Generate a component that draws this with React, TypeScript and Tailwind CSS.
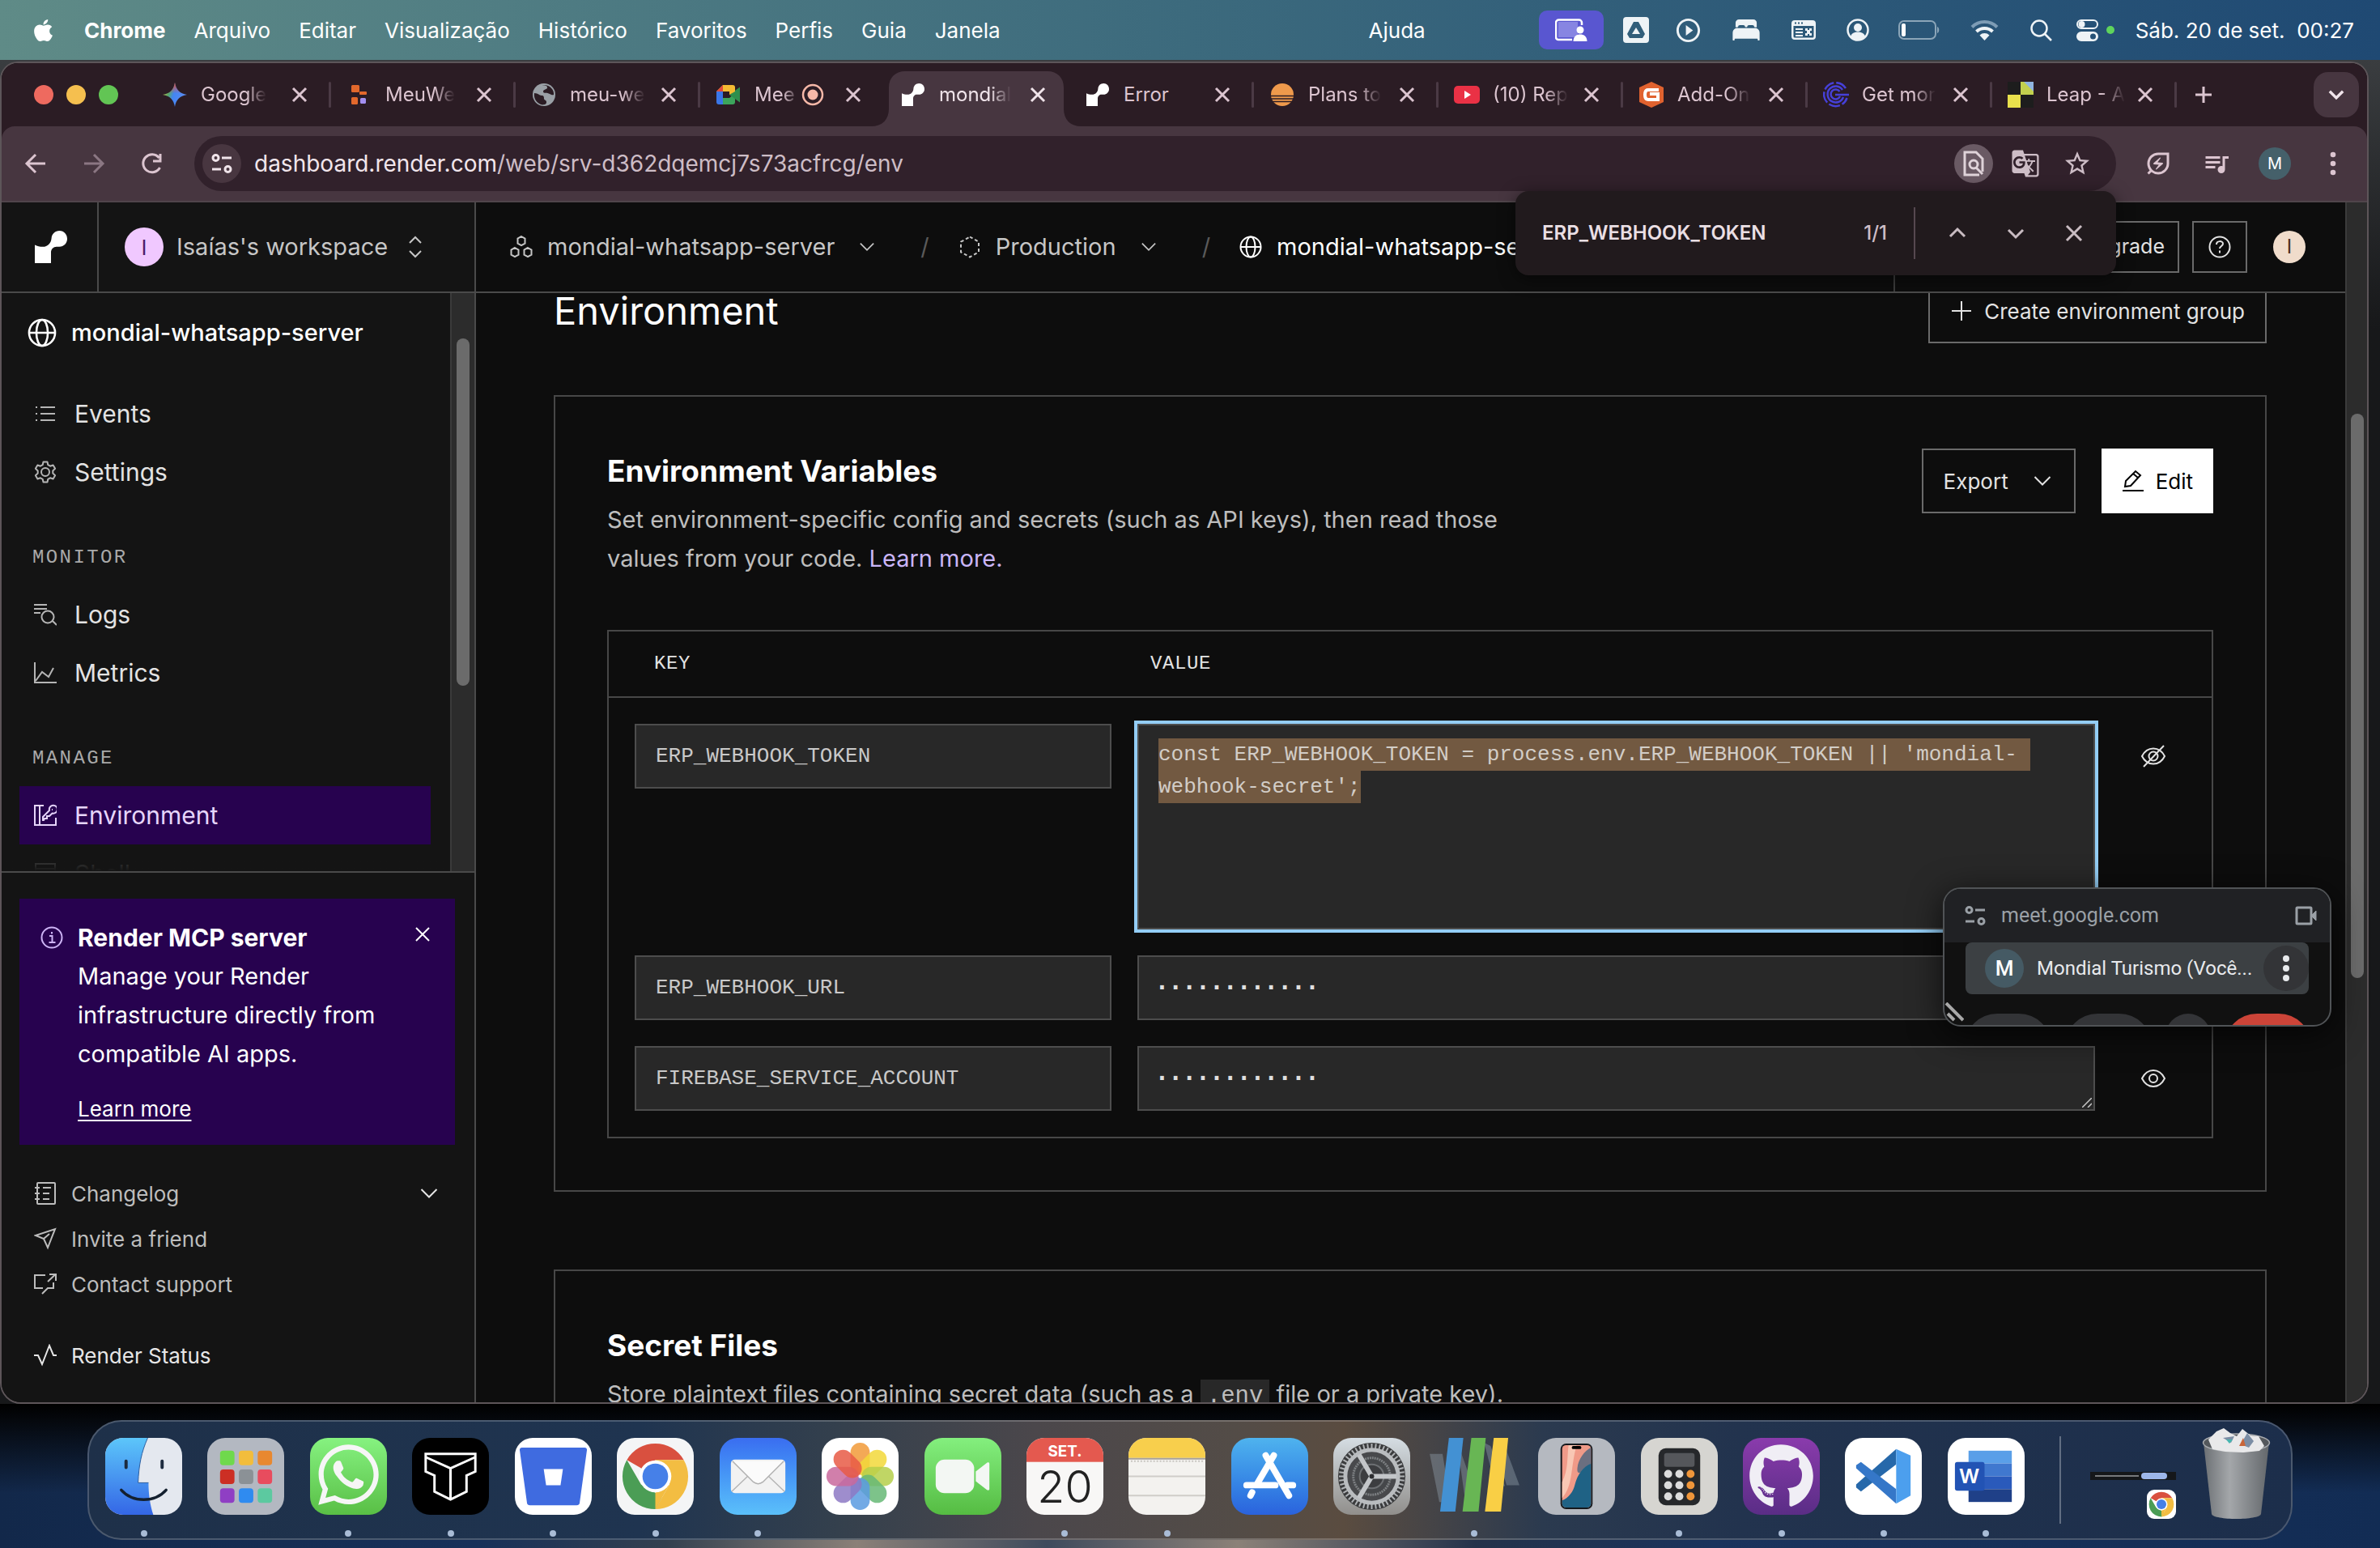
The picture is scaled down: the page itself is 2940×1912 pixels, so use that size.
import React, { useEffect, useRef } from "react";
import { FaApple, FaGithub, FaWhatsapp } from "react-icons/fa";
import { IoBed } from "react-icons/io5";
import {
  MdGTranslate,
  MdOutlineEnergySavingsLeaf,
  MdOutlineQueueMusic,
  MdPlayCircleOutline,
  MdStarBorder,
} from "react-icons/md";

type SvgProps = {
  className?: string;
  box?: string;
  sw?: number;
  children: React.ReactNode;
};

function Line({ className = "size-7", box = "0 0 28 28", sw = 2, children }: SvgProps) {
  return (
    <svg
      className={"shrink-0 " + className}
      viewBox={box}
      fill="none"
      stroke="currentColor"
      strokeWidth={sw}
      aria-hidden="true"
    >
      {children}
    </svg>
  );
}

/* ---------- shared glyphs ---------- */

const Cross = ({ className = "size-7", sw = 2 }: { className?: string; sw?: number }) => (
  <Line className={className} sw={sw}>
    <path d="M6 6l16 16M22 6L6 22" />
  </Line>
);
const Down = ({ className = "size-7", sw = 2 }: { className?: string; sw?: number }) => (
  <Line className={className} sw={sw}>
    <path d="M4.500 9l9.500 9.500L23.500 9" />
  </Line>
);
const Globe = ({ className = "size-7" }: { className?: string }) => (
  <Line className={className}>
    <circle cx="14" cy="14" r="12.500" />
    <ellipse cx="14" cy="14" rx="5.500" ry="12.500" />
    <path d="M1.500 14h25" />
  </Line>
);
const RenderMark = ({ className = "" }: { className?: string }) => (
  <svg className={"shrink-0 " + className} viewBox="0 0 40 40" fill="#fff" aria-hidden="true">
    <path d="M30.500 0C25 0 21 4 20.600 9.200c-.5 6-4.600 10.600-10.700 10.600C6 19.800 3 19 0 17.500V40h20V26.500c0-3.800 3-6.800 6.800-6.800h3.500C35.700 19.700 40 15.300 40 9.900S36 0 30.500 0z" />
  </svg>
);
const Tune = ({ className = "size-7" }: { className?: string }) => (
  <Line className={className} sw={3}>
    <circle cx="6.500" cy="7" r="3.500" />
    <path d="M14 7h12M2 21h11" />
    <circle cx="21.500" cy="21" r="3.500" />
  </Line>
);

/* ---------- macOS menu bar ---------- */

const menus = ["Arquivo", "Editar", "Visualização", "Histórico", "Favoritos", "Perfis", "Guia", "Janela"];

function MenuBar() {
  return (
    <header className="flex h-[74px] shrink-0 items-center bg-linear-to-r from-[#5f8b87] via-[#3c6a7d] to-[#1f4973] pr-8 pl-[38px] text-[26px] text-white">
      <FaApple className="mr-[35px] size-[31px] shrink-0" />
      <nav className="flex flex-1 items-center gap-[35px]">
        <button className="font-bold">Chrome</button>
        {menus.map((m) => (
          <button key={m}>{m}</button>
        ))}
      </nav>
      <button className="mr-[140px]">Ajuda</button>
      <div className="flex items-center">
        <span className="mr-6 flex h-12 w-20 items-center justify-center rounded-[10px] bg-[#5956d0]">
          <svg className="h-[28px] w-[40px]" viewBox="0 0 40 28" fill="none" aria-hidden="true">
            <rect x="4" y="4" width="24" height="19" fill="#8785e2" />
            <path d="M33 8V5a3.500 3.500 0 0 0-3.500-3.500h-25A3.500 3.500 0 0 0 1 5v18a3 3 0 0 0 3 3h17" stroke="#fff" strokeWidth="2.500" />
            <circle cx="31" cy="14" r="4.500" fill="#fff" />
            <path d="M22.500 28c0-6 4-8.500 8.500-8.500s8.500 2.500 8.500 8.500z" fill="#fff" />
          </svg>
        </span>
        <svg className="mr-[31px] size-8" viewBox="0 0 32 32" aria-hidden="true">
          <path fillRule="evenodd" fill="#eef3f6" d="M4 0h24a4 4 0 0 1 4 4v24a4 4 0 0 1-4 4H4a4 4 0 0 1-4-4V4a4 4 0 0 1 4-4zm9 6L5 21l3 5h16l3-5L19 6zm3 7l5 8H11z" />
        </svg>
        <MdPlayCircleOutline className="mr-[35px] size-[35px] text-[#eef3f6]" />
        <IoBed className="mr-[37px] size-[38px] text-[#eef3f6]" />
        <svg className="mr-[38px] h-6 w-[30px]" viewBox="0 0 30 24" aria-hidden="true">
          <path fillRule="evenodd" fill="#eef3f6" d="M4 0h22a4 4 0 0 1 4 4v16a4 4 0 0 1-4 4H4a4 4 0 0 1-4-4V4a4 4 0 0 1 4-4zM2.500 7v13a1.500 1.500 0 0 0 1.500 1.500h22a1.500 1.500 0 0 0 1.500-1.500V7zM4 2.500v2h2v-2zm4 0v2h2v-2zm4 0v2h2v-2zM5 10h9v2H5zm0 4h9v2H5zm0 4h9v2H5zM17 10h3v2h2v-2h3v3h-2v3h2v3h-3v-2h-2v2h-3v-3h2v-3h-2z" />
        </svg>
        <svg className="mr-[36px] size-7" viewBox="0 0 28 28" aria-hidden="true">
          <circle cx="14" cy="14" r="12.500" fill="none" stroke="#eef3f6" strokeWidth="2.500" />
          <circle cx="14" cy="11" r="5" fill="#eef3f6" />
          <path d="M5 22c1-4 5-5.500 9-5.500s8 1.500 9 5.500c-2 3-6 4.500-9 4.500S7 25 5 22z" fill="#eef3f6" />
        </svg>
        <svg className="mr-[37px] h-6 w-[52px]" viewBox="0 0 52 24" aria-hidden="true">
          <rect x="1" y="1" width="45" height="22" rx="6" fill="none" stroke="#8ba5b8" strokeWidth="2" />
          <rect x="4" y="4" width="5" height="16" rx="2" fill="#fff" />
          <path d="M48 8v8c3-1 3-7 0-8z" fill="#8ba5b8" />
        </svg>
        <svg className="mr-[39px] h-[26px] w-[35px]" viewBox="0 0 35 26" fill="none" aria-hidden="true">
          <path d="M2 9.500a22 22 0 0 1 31 0" stroke="#7d9cb5" strokeWidth="4" />
          <path d="M7.500 15a14.500 14.500 0 0 1 20 0" stroke="#eef3f6" strokeWidth="4" />
          <path d="M11.500 19.500a8.500 8.500 0 0 1 12 0L17.500 26z" fill="#eef3f6" />
        </svg>
        <svg className="mr-[30px] size-[27px]" viewBox="0 0 27 27" fill="none" stroke="#eef3f6" strokeWidth="2.500" aria-hidden="true">
          <circle cx="11" cy="11" r="9.500" />
          <path d="M18 18l8 8" />
        </svg>
        <svg className="mr-[10px] h-[27px] w-[27px]" viewBox="0 0 27 27" aria-hidden="true">
          <rect x="1" y="1" width="25" height="10" rx="5" fill="none" stroke="#eef3f6" strokeWidth="2" />
          <circle cx="6.500" cy="6" r="4" fill="#eef3f6" />
          <path fillRule="evenodd" fill="#eef3f6" d="M6 15h15a6 6 0 0 1 0 12H6a6 6 0 0 1 0-12zm14.500 2.500a3.500 3.500 0 1 0 0 7 3.500 3.500 0 0 0 0-7z" />
        </svg>
        <span className="mr-[26px] size-[10px] rounded-full bg-[#5fd45c]" />
        <time className="whitespace-pre">{"Sáb. 20 de set.  00:27"}</time>
      </div>
    </header>
  );
}

/* ---------- Chrome tabs ---------- */

const favicons: Record<string, React.ReactNode> = {
  gemini: (
    <>
      <defs>
        <linearGradient id="gem" x1="0" y1="0" x2="1" y2="0.300">
          <stop offset="0" stopColor="#f5c53d" />
          <stop offset="0.350" stopColor="#56a66a" />
          <stop offset="0.550" stopColor="#4285f4" />
          <stop offset="1" stopColor="#5b8cf0" />
        </linearGradient>
        <linearGradient id="gem2" x1="0" y1="0" x2="0" y2="1">
          <stop offset="0" stopColor="#ea4b3f" />
          <stop offset="0.450" stopColor="#ea4b3f" stopOpacity="0" />
        </linearGradient>
      </defs>
      <path d="M16 1c1.500 9 6 13.500 15 15-9 1.500-13.500 6-15 15-1.500-9-6-13.500-15-15 9-1.500 13.500-6 15-15z" fill="url(#gem)" />
      <path d="M16 1c1.500 9 6 13.500 15 15-9 1.500-13.500 6-15 15-1.500-9-6-13.500-15-15 9-1.500 13.500-6 15-15z" fill="url(#gem2)" />
    </>
  ),
  blocks: (
    <>
      <rect x="6" y="4" width="10" height="9" rx="1.500" fill="#e2682c" />
      <rect x="16" y="12" width="9" height="4" rx="1" fill="#e2682c" />
      <rect x="6" y="19" width="8" height="9" rx="1.500" fill="#e2682c" />
      <rect x="17" y="20" width="7" height="7" rx="1.500" fill="#a38ff0" />
    </>
  ),
  world: (
    <>
      <circle cx="16" cy="16" r="14" fill="#9aa0a6" />
      <path d="M4 14c5 0 6 3 9 3s3 2 3 4 3 1 3 4-2 3-5 3.500C7 27 3 21 4 14zM14 4c2 1 6 0 6 3s-5 2-5 5 5 1 8 3 5 1 5 1c1-6-5-13-14-12z" fill="#2b1c24" />
    </>
  ),
  meet: (
    <>
      <path d="M9 4h12v8h-6v8H9v-8H1z" fill="#f5bb33" />
      <path d="M9 4v8H1z" fill="#e04a3c" />
      <path d="M1 12h8v16H4a3 3 0 0 1-3-3z" fill="#3a76e8" />
      <path d="M9 20h8l7-6v11a3 3 0 0 1-3 3H9z" fill="#3ca55c" />
      <path d="M17 16l13-9.500v19z" fill="#2f8f4d" />
      <path d="M21 4c2 0 3 1 3 3v5l-7 4v-4z" fill="#f5bb33" />
      <rect x="9" y="12" width="8" height="8" fill="#2b1c24" />
    </>
  ),
  render: (
    <path transform="translate(2 2) scale(.7)" d="M30.500 0C25 0 21 4 20.600 9.200c-.5 6-4.600 10.600-10.700 10.600C6 19.800 3 19 0 17.500V40h20V26.500c0-3.800 3-6.800 6.800-6.800h3.500C35.700 19.700 40 15.300 40 9.900S36 0 30.500 0z" fill="#fff" />
  ),
  sun: (
    <>
      <circle cx="16" cy="16" r="14" fill="#ef9a4c" />
      <path d="M1 17.500h30M1 21h30M1 24.500h30" stroke="#2b1c24" strokeWidth="1.500" />
    </>
  ),
  youtube: (
    <>
      <rect x="0" y="5" width="32" height="22" rx="5" fill="#ea3145" />
      <path d="M13 11l8 5-8 5z" fill="#fff" />
    </>
  ),
  addon: (
    <>
      <path d="M16 0l15 7v18l-15 7-15-7V7z" fill="#e0622f" />
      <path d="M25 10H12c-3 0-4 2-4 6s1 6 4 6h12v-7H14" fill="none" stroke="#fff" strokeWidth="4" />
    </>
  ),
  gmark: (
    <g fill="none" stroke="#4640d8">
      <path d="M28 8A14.500 14.500 0 1 0 29.500 20" strokeWidth="2.500" strokeDasharray="14 3" />
      <path d="M24 10A10 10 0 1 0 25 19" strokeWidth="2.500" />
      <path d="M20.500 12A6 6 0 1 0 21 18M15 16h17" strokeWidth="2.500" />
    </g>
  ),
  leap: (
    <>
      <rect width="16" height="16" fill="#1d1d1d" />
      <rect x="16" y="16" width="16" height="16" fill="#1d1d1d" />
      <rect y="16" width="16" height="16" fill="#e8e04c" />
      <path d="M16 0h16v16H16z" fill="#c2d04e" />
      <path d="M20 0h12v12z" fill="#8fb4e0" />
    </>
  ),
};

const tabs: { icon: string; title: string; sep?: boolean; active?: boolean; rec?: boolean; whole?: boolean }[] = [
  { icon: "gemini", title: "Google", sep: true },
  { icon: "blocks", title: "MeuWe", sep: true },
  { icon: "world", title: "meu-we", sep: true },
  { icon: "meet", title: "Mee", rec: true },
  { icon: "render", title: "mondial", active: true },
  { icon: "render", title: "Error", sep: true, whole: true },
  { icon: "sun", title: "Plans to", sep: true },
  { icon: "youtube", title: "(10) Rep", sep: true },
  { icon: "addon", title: "Add-On", sep: true },
  { icon: "gmark", title: "Get mor", sep: true },
  { icon: "leap", title: "Leap - A", sep: true },
];

function TabStrip() {
  return (
    <div className="flex h-[78px] shrink-0 items-center bg-[#2b1c24] pr-[10px] pl-[40px]">
      <div className="mr-[34px] flex gap-4">
        <button aria-label="Fechar" className="size-6 rounded-full bg-[#ee6a5f]" />
        <button aria-label="Minimizar" className="size-6 rounded-full bg-[#f5bf4f]" />
        <button aria-label="Ampliar" className="size-6 rounded-full bg-[#62c554]" />
      </div>
      {tabs.map((t, i) => (
        <div key={i} className="relative flex h-full w-[228px] min-w-0 items-center">
          {t.active && (
            <svg className="absolute inset-x-[-16px] bottom-0 h-[68px] w-[260px]" viewBox="0 0 260 68" fill="#473640" aria-hidden="true">
              <path d="M0 68c14 0 22-8 22-22V20C22 8 30 0 42 0h176c12 0 20 8 20 20v26c0 14 8 22 22 22z" />
            </svg>
          )}
          <svg className="relative ml-5 size-8 shrink-0" viewBox="0 0 32 32" aria-hidden="true">
            {favicons[t.icon]}
          </svg>
          <span
            className={
              "relative ml-4 text-[24px] whitespace-nowrap " +
              (t.whole ? "" : t.rec ? "mask-r-from-70% mask-r-to-110% " : "mask-r-from-70% mask-r-to-100% ") +
              (t.active ? "text-[#f0e4ea]" : "text-[#dcc5d0]")
            }
          >
            {t.title}
          </span>
          {t.rec && (
            <svg className="relative ml-2 size-7" viewBox="0 0 28 28" aria-hidden="true">
              <circle cx="14" cy="14" r="12" fill="none" stroke="#f6b8a8" strokeWidth="2.500" />
              <circle cx="14" cy="14" r="6.500" fill="#f6b8a8" />
            </svg>
          )}
          <button
            aria-label="Fechar guia"
            className={"relative mr-[24px] ml-auto " + (t.active ? "text-[#f0e4ea]" : "text-[#dcc5d0]")}
          >
            <Cross className="size-7" sw={3} />
          </button>
          {t.sep && <span className="absolute right-[-1px] h-8 w-[3px] rounded bg-[#4b3a45]" />}
        </div>
      ))}
      <button aria-label="Nova guia" className="ml-5 text-[#dcc5d0]">
        <Line sw={3}>
          <path d="M14 4v20M4 14h20" />
        </Line>
      </button>
      <button aria-label="Pesquisar guias" className="ml-auto flex size-14 items-center justify-center rounded-[18px] bg-[#473640] text-[#f0e4ea]">
        <Down className="size-6" sw={4} />
      </button>
    </div>
  );
}

function Toolbar() {
  return (
    <div className="shrink-0 bg-[#2b1c24]">
      <div className="flex h-[94px] items-center rounded-t-[16px] border-b-2 border-[#50454b] bg-[#473640] px-[6px] text-[#dcc5d0]">
        <button aria-label="Voltar" className="flex w-[72px] justify-center">
          <Line sw={3}>
            <path d="M26 14H4M14 3L3 14l11 11" />
          </Line>
        </button>
        <button aria-label="Avançar" className="flex w-[72px] justify-center text-[#8b7783]">
          <Line sw={3}>
            <path d="M2 14h22M14 3l11 11-11 11" />
          </Line>
        </button>
        <button aria-label="Recarregar" className="flex w-[72px] justify-center">
          <Line sw={3}>
            <path d="M23.500 19A11 11 0 1 1 22.500 7M24 2v9h-9" />
          </Line>
        </button>
        <div className="ml-4 flex h-[68px] flex-1 items-center rounded-full bg-[#31212b] pr-4 pl-[10px]">
          <button aria-label="Informações do site" className="mr-4 flex size-12 items-center justify-center rounded-full bg-[#483640] text-[#f0e4ea]">
            <Tune className="size-7" />
          </button>
          <p className="flex-1 text-[28px] text-[#cdbdc6]">
            <span className="text-[#f2e6ec]">dashboard.render.com</span>/web/srv-d362dqemcj7s73acfrcg/env
          </p>
          <button aria-label="Localizar na página" className="mx-2 flex size-12 items-center justify-center rounded-full bg-[#6a5a64] text-[#dfd3d9]">
            <Line className="h-8 w-7" box="0 0 28 32" sw={3}>
              <path d="M25 26V10l-8-8H3v28h18" />
              <circle cx="14" cy="17" r="5" />
              <path d="M17 21l8 8" />
            </Line>
          </button>
          <button aria-label="Traduzir" className="flex w-16 justify-center text-[#cdbdc6]">
            <MdGTranslate className="size-9" />
          </button>
          <button aria-label="Favoritar" className="flex w-16 justify-center text-[#cdbdc6]">
            <MdStarBorder className="size-9" />
          </button>
        </div>
        <div className="ml-4 flex items-center">
          <button aria-label="Economia de energia" className="flex w-[72px] justify-center">
            <MdOutlineEnergySavingsLeaf className="size-9" />
          </button>
          <button aria-label="Mídia" className="flex w-[72px] justify-center">
            <MdOutlineQueueMusic className="size-9" />
          </button>
          <button className="mx-4 flex size-10 items-center justify-center rounded-full bg-[#45606a] text-[20px] text-white">M</button>
          <button aria-label="Menu" className="flex w-[72px] justify-center">
            <svg className="size-8" viewBox="0 0 32 32" fill="currentColor" aria-hidden="true">
              <circle cx="16" cy="5" r="3.300" />
              <circle cx="16" cy="16" r="3.300" />
              <circle cx="16" cy="27" r="3.300" />
            </svg>
          </button>
        </div>
      </div>
    </div>
  );
}

function FindBar() {
  return (
    <div className="absolute top-[158px] right-[310px] flex h-[104px] w-[742px] items-center rounded-[16px] bg-[#211a1d] pr-4 pl-[33px] text-[24px] font-medium text-[#eadfe4] shadow-[0_4px_20px_rgba(0,0,0,0.5)]">
      <input aria-label="Localizar" defaultValue="ERP_WEBHOOK_TOKEN" className="min-w-0 flex-1 bg-transparent font-semibold outline-none" />
      <span className="text-[#cdbdc6]">1/1</span>
      <span className="mr-4 ml-[33px] h-16 w-[2px] bg-[#564850]" />
      {["M5 18l9-9 9 9", "M5 10l9 9 9-9", "M5 5l18 18M23 5L5 23"].map((d, i) => (
        <button key={d} aria-label={["Anterior", "Próximo", "Fechar"][i]} className="flex w-[72px] justify-center text-[#c9bcc2]">
          <Line className="size-7" sw={3}>
            <path d={d} />
          </Line>
        </button>
      ))}
    </div>
  );
}

/* ---------- Render dashboard ---------- */

const icons: Record<string, React.ReactNode> = {
  list: <path d="M2 6h2M8 6h18M2 14h2M8 14h18M2 22h2M8 22h18" />,
  gear: (
    <>
      <circle cx="14" cy="14" r="5" />
      <path d="M11.500 1.500h5l.8 3.700 2.700 1.500 3.600-1.200 2.500 4.300-2.800 2.600v3.200l2.800 2.600-2.500 4.300-3.600-1.200-2.700 1.500-.8 3.700h-5l-.8-3.700L8 21.300l-3.600 1.200-2.500-4.300 2.800-2.600v-3.200L1.900 9.800l2.500-4.300L8 6.700l2.700-1.500z" strokeLinejoin="round" />
    </>
  ),
  logs: (
    <>
      <path d="M0 2h16M0 7h16M0 12h8M23 22l5 5" />
      <circle cx="17" cy="17" r="7.500" />
    </>
  ),
  chart: <path d="M1 1v25h27M2 24l8-11 8 6 6-11" />,
  env: <path d="M12 2H1v24h26v-9M7 2v24M11 20v-4l8-8a5 5 0 1 1 3.500 3.500L19 15h-3v3h-3l-1 2zM22 7h1" />,
  shell: (
    <>
      <rect x="2" y="2" width="24" height="24" />
      <path d="M2 8h24" />
    </>
  ),
  book: (
    <>
      <rect x="4" y="1" width="22" height="26" rx="1" />
      <path d="M1 7h6M1 14h6M1 21h6M11 7h10M11 14h8M11 21h8" />
    </>
  ),
  send: <path d="M2 10L26 2l-9 23-5-11zM12 14l7-6" />,
  support: <path d="M14 3H1v16h10M10 26l7-7h7v-7M17 11L26.500 2M19 2h8v8" />,
  pulse: <path d="M0 14h5l5 11L19 2l5 12h4" />,
};

function NavItem({ icon, label, active, faded }: { icon: string; label: string; active?: boolean; faded?: boolean }) {
  return (
    <a
      href="#"
      className={
        "mr-6 ml-[22px] flex h-[72px] items-center gap-[22px] px-[18px] text-[30px] " +
        (active ? "bg-[#27024f] text-[#e6d5fb]" : faded ? "text-[#777]" : "text-[#e3e3e3]")
      }
    >
      <Line className={"size-7 " + (active || faded ? "" : "text-[#b5b5b5]")}>{icons[icon]}</Line>
      {label}
    </a>
  );
}

const NavLabel = ({ children }: { children: string }) => (
  <h2 className="pt-[50px] pb-[14px] pl-[38px] font-['Liberation_Mono',monospace] text-[24px] leading-10 tracking-widest text-[#a9a9a9]">{children}</h2>
);

function FootLink({ icon, label, bright, more }: { icon: string; label: string; bright?: boolean; more?: boolean }) {
  return (
    <a href="#" className={"flex h-14 items-center gap-[18px] pr-[18px] pl-[18px] text-[26px] " + (bright ? "text-[#e6e6e6]" : "text-[#bdbdbd]")}>
      <Line className="size-7">{icons[icon]}</Line>
      <span className="flex-1">{label}</span>
      {more && <Down className="size-7 text-[#e6e6e6]" />}
    </a>
  );
}

function Sidebar() {
  return (
    <aside className="flex w-[586px] shrink-0 flex-col border-r-2 border-[#4a4a4a] bg-[#141414]">
      <div className="flex min-h-0 flex-1">
        <nav className="relative h-full min-w-0 flex-1 overflow-hidden">
          <a href="#" className="mb-4 flex h-[97px] items-center gap-[18px] pl-8 text-[29px] font-medium whitespace-nowrap text-white">
            <Globe className="size-9" />
            mondial-whatsapp-server
          </a>
          <NavItem icon="list" label="Events" />
          <NavItem icon="gear" label="Settings" />
          <NavLabel>MONITOR</NavLabel>
          <NavItem icon="logs" label="Logs" />
          <NavItem icon="chart" label="Metrics" />
          <NavLabel>MANAGE</NavLabel>
          <NavItem icon="env" label="Environment" active />
          <NavItem icon="shell" label="Shell" faded />
          <div className="absolute inset-x-0 bottom-0 h-6 bg-linear-to-b from-[#141414]/30 to-[#141414]" />
        </nav>
        <div className="w-[30px] border-l-2 border-[#3b3b3b] bg-[#2c2c2c] pt-14">
          <div className="mx-auto h-[429px] w-4 rounded-full bg-[#6b6b6b]" />
        </div>
      </div>
      <div className="border-t-2 border-[#4a4a4a] pt-8 pr-6 pb-[30px] pl-[22px]">
        <section className="relative flex bg-[#27024f] px-[26px] py-6 text-[29px] leading-[48px] text-white">
          <Line className="mt-[10px] mr-[18px] size-7 text-[#cdb4f5]">
            <circle cx="14" cy="14" r="12.500" />
            <path d="M11 12h3.500v8M10.500 20h8M14 7v2.500" />
          </Line>
          <div>
            <h3 className="text-[30px] font-bold">Render MCP server</h3>
            <p>
              Manage your Render
              <br />
              infrastructure directly from
              <br />
              compatible AI apps.
            </p>
            <a href="#" className="mt-6 block text-[26px] leading-10 underline underline-offset-4">
              Learn more
            </a>
          </div>
          <button aria-label="Dismiss" className="absolute top-[30px] right-[26px]">
            <Cross className="size-7" />
          </button>
        </section>
        <div className="mt-8">
          <FootLink icon="book" label="Changelog" more />
          <FootLink icon="send" label="Invite a friend" />
          <FootLink icon="support" label="Contact support" />
        </div>
        <div className="mt-8">
          <FootLink icon="pulse" label="Render Status" bright />
        </div>
      </div>
    </aside>
  );
}

function PageHeader() {
  return (
    <header className="flex h-[112px] shrink-0 border-b-2 border-[#4a4a4a] text-[29px] text-[#c6c6c6]">
      <a href="#" aria-label="Render" className="flex w-[120px] items-center border-r-2 border-[#4a4a4a] bg-[#141414] pl-[41px]">
        <RenderMark className="size-10" />
      </a>
      <button className="flex w-[466px] items-center border-r-2 border-[#4a4a4a] bg-[#141414] pl-8">
        <span className="mr-[16px] flex size-12 items-center justify-center rounded-full bg-[#f0c8ff] text-[26px] text-[#4c1d6b]">I</span>
        Isaías's workspace
        <Line className="ml-6 h-7 w-5" box="0 0 20 28">
          <path d="M3 9l7-7 7 7M3 19l7 7 7-7" />
        </Line>
      </button>
      <nav className="flex min-w-0 flex-1 items-center pl-[42px] whitespace-nowrap">
        <Line className="mr-[18px] size-7">
          <path d="M14 1l4.500 2.600v6L14 12.200 9.500 9.600v-6zM6 15l4.500 2.600v6L6 26.200l-4.500-2.600v-6zM22 15l4.500 2.600v6L22 26.200l-4.500-2.600v-6z" />
        </Line>
        <a href="#">mondial-whatsapp-server</a>
        <Down className="ml-7 size-6" />
        <span className="mr-9 ml-[54px] text-[#5a5a5a]">/</span>
        <Line className="mr-[18px] size-7">
          <path d="M14 1.500l11 6.200v12.600l-11 6.200-11-6.200V7.700z" strokeDasharray="4 3" />
        </Line>
        <a href="#">Production</a>
        <Down className="ml-7 size-6" />
        <span className="mr-9 ml-[54px] text-[#5a5a5a]">/</span>
        <Globe className="mr-[18px] size-7 text-white" />
        <a href="#" className="text-white">mondial-whatsapp-server</a>
      </nav>
      <div className="flex items-center border-l-2 border-[#3b3b3b] bg-[#0d0d0d] pr-[49px] pl-[200px] text-[25px] text-[#e3e3e3]">
        <button className="mr-4 flex h-16 w-[151px] items-center justify-end border-2 border-[#6a6a6a] pr-4">Upgrade</button>
        <button aria-label="Help" className="mr-8 flex h-16 w-[68px] items-center justify-center border-2 border-[#6a6a6a]">
          <Line>
            <circle cx="14" cy="14" r="12.500" />
            <path d="M10 11c0-5 8-5 8-1 0 3-4 3-4 6M14 18.500v3" />
          </Line>
        </button>
        <button className="flex size-10 items-center justify-center rounded-full bg-[#f0dccb] text-[24px] text-[#4a2f1a]">I</button>
      </div>
    </header>
  );
}

const field =
  "block w-full resize-none border-2 border-[#4d4d4d] bg-[#282828] px-6 font-['Liberation_Mono',monospace] text-[26px] leading-10 text-[#c9c9c9] outline-none";
const masked = "············";

function EnvTable() {
  const token = useRef<HTMLTextAreaElement>(null);
  useEffect(() => {
    token.current?.focus({ preventScroll: true });
    token.current?.select();
  }, []);
  return (
    <div className="mt-16 border-2 border-[#474747] pb-8">
      <table className="w-full table-fixed border-collapse">
        <colgroup>
          <col className="w-[653px]" />
          <col />
          <col className="w-[144px]" />
        </colgroup>
        <thead>
          <tr className="h-[81px] border-b-2 border-[#474747] text-left font-['Liberation_Mono',monospace] text-[24px] tracking-wide text-[#e3e3e3]">
            <th className="pl-14 font-normal">KEY</th>
            <th className="pl-4 font-normal">VALUE</th>
            <th />
          </tr>
        </thead>
        <tbody className="align-top">
          <tr>
            <td className="px-8 pt-8">
              <input aria-label="Key" readOnly value="ERP_WEBHOOK_TOKEN" className={field + " h-20"} />
            </td>
            <td className="pt-8">
              <textarea
                ref={token}
                aria-label="Value of ERP_WEBHOOK_TOKEN"
                readOnly
                value={"const ERP_WEBHOOK_TOKEN = process.env.ERP_WEBHOOK_TOKEN || 'mondial-\nwebhook-secret';"}
                className={field + " h-[254px] py-4 ring-4 ring-[#93cdf5] selection:bg-[rgba(115,90,66,0.99)] selection:text-[#d2cdc7]"}
              />
            </td>
            <td className="pt-8">
              <button aria-label="Hide value" className="mx-auto flex h-20 items-center text-[#e3e3e3]">
                <Line className="size-8" box="0 0 32 32">
                  <path d="M2 16c3-6 8-9.500 14-9.500S27 10 30 16c-3 6-8 9.500-14 9.500S5 22 2 16zM29 3L4 29" />
                  <circle cx="16" cy="16" r="5.500" />
                </Line>
              </button>
            </td>
          </tr>
          {["ERP_WEBHOOK_URL", "FIREBASE_SERVICE_ACCOUNT"].map((k) => (
            <tr key={k}>
              <td className="px-8 pt-8">
                <input aria-label="Key" readOnly value={k} className={field + " h-20"} />
              </td>
              <td className="relative pt-8">
                <textarea
                  aria-label={"Value of " + k}
                  readOnly
                  value={masked}
                  className="block h-20 w-full resize-none overflow-hidden border-2 border-[#4d4d4d] bg-[#282828] px-5 py-[18px] font-['DejaVu_Sans_Mono',monospace] text-[28px] leading-10 font-bold text-[#e0e0e0] outline-none"
                />
                <Line className="absolute right-1 bottom-1 size-3 text-[#c9c9c9]" box="0 0 12 12" sw={1.5}>
                  <path d="M0 12L12 0M7 12l5-5" />
                </Line>
              </td>
              <td className="pt-8">
                <button aria-label="Show value" className="mx-auto flex h-20 items-center text-[#e3e3e3]">
                  <Line className="size-8" box="0 0 32 32">
                    <path d="M2 16c3-6 8-10 14-10s11 4 14 10c-3 6-8 10-14 10S5 22 2 16z" />
                    <circle cx="16" cy="16" r="5" />
                  </Line>
                </button>
              </td>
            </tr>
          ))}
        </tbody>
      </table>
    </div>
  );
}

function Main() {
  return (
    <main className="min-w-0 flex-1 overflow-hidden bg-[#0d0d0d] pr-[97px] pl-24">
      <div className="-mt-[18px] mb-16 flex h-20 items-center justify-between">
        <h1 className="text-[47px] text-white">Environment</h1>
        <button className="flex h-20 items-center gap-[14px] border-2 border-[#6a6a6a] px-[25px] text-[26px] text-[#e3e3e3]">
          <Line>
            <path d="M14 2v24M2 14h24" />
          </Line>
          Create environment group
        </button>
      </div>
      <section className="border-2 border-[#474747] p-16">
        <div className="flex justify-between">
          <div>
            <h2 className="text-[37px] leading-14 font-bold text-white">Environment Variables</h2>
            <p className="mt-2 text-[29px] leading-[48px] text-[#bdbdbd]">
              Set environment-specific config and secrets (such as API keys), then read those
              <br />
              values from your code.{" "}
              <a href="#" className="text-[#c9b5f7]">
                Learn more.
              </a>
            </p>
          </div>
          <div className="flex h-20 gap-8 text-[26px]">
            <button className="flex items-center gap-[28px] border-2 border-[#6a6a6a] px-[25px] text-[#e3e3e3]">
              Export <Down className="size-7" />
            </button>
            <button className="flex items-center gap-[14px] bg-white px-[25px] text-black">
              <Line>
                <path d="M1 26h26M4 21l1-7L17 2l6 5-12 13zM14 5l6 5" />
              </Line>
              Edit
            </button>
          </div>
        </div>
        <EnvTable />
      </section>
      <section className="mt-24 border-2 border-[#474747] p-16">
        <h2 className="text-[37px] leading-14 font-bold text-white">Secret Files</h2>
        <p className="mt-2 text-[29px] leading-[48px] text-[#bdbdbd]">
          Store plaintext files containing secret data (such as a{" "}
          <code className="bg-[#282828] px-2 py-1 font-['Liberation_Mono',monospace]">.env</code> file or a private key).
        </p>
      </section>
    </main>
  );
}

/* ---------- Meet picture-in-picture ---------- */

function MeetWindow() {
  return (
    <div className="absolute top-[1096px] right-[60px] flex h-[172px] w-[480px] flex-col overflow-hidden rounded-[22px] border-2 border-[#505356] bg-[#111] font-[Roboto,sans-serif] shadow-[0_8px_40px_rgba(0,0,0,0.7)]">
      <div className="flex h-[66px] shrink-0 items-center bg-[#202124] pr-[16px] pl-[24px] text-[25px] text-[#9aa0a6]">
        <Tune className="mr-[18px] size-7" />
        <span className="flex-1">meet.google.com</span>
        <Line sw={3}>
          <rect x="3" y="4" width="18" height="20" rx="1" />
          <path d="M21 14l6-6v12z" fill="currentColor" strokeWidth="1" />
        </Line>
      </div>
      <div className="mx-[26px] flex h-16 shrink-0 items-center rounded-lg bg-[#3c4043] pl-6 text-[24px] text-[#e8eaed]">
        <span className="mr-4 flex size-12 shrink-0 items-center justify-center rounded-full bg-[#455a64] text-[26px] font-medium text-white">M</span>
        <span className="flex-1 whitespace-nowrap">Mondial Turismo (Você...</span>
        <button aria-label="Mais opções" className="flex size-14 shrink-0 items-center justify-center rounded-full bg-[#333437]">
          <svg className="h-8 w-3" viewBox="0 0 12 32" fill="#e8eaed" aria-hidden="true">
            <circle cx="6" cy="4" r="4" />
            <circle cx="6" cy="16" r="4" />
            <circle cx="6" cy="28" r="4" />
          </svg>
        </button>
      </div>
      <div className="mt-6 flex gap-[17px] pl-[25px]">
        <span className="h-20 w-[107px] shrink-0 rounded-full bg-[#333437]" />
        <span className="h-20 w-[107px] shrink-0 rounded-full bg-[#333437]" />
        <span className="h-20 w-[56px] shrink-0 rounded-full bg-[#333437]" />
        <span className="h-20 w-[107px] shrink-0 rounded-full bg-[#cc4438]" />
      </div>
      <Line className="absolute bottom-1 left-0 size-6 text-[#a8a8a8]" box="0 0 24 24" sw={4}>
        <path d="M2 1l21 21M4 14l8 8" />
      </Line>
    </div>
  );
}

/* ---------- Dock ---------- */

function ChromeLogo() {
  return (
    <>
      <path d="M48 48L12.500 27.500A41 41 0 0 1 83.500 27.500H48z" fill="#d9503f" />
      <path d="M48 27.500h35.500A41 41 0 0 1 48 89l17.800-30.800z" fill="#f3bd42" />
      <path d="M12.500 27.500L30.200 58.200 48 68.500l8 6L48 89A41 41 0 0 1 12.500 27.500z" fill="#4b9d55" />
      <path d="M48 68.500l17.800-10.300L48 89z" fill="#f3bd42" />
      <circle cx="48" cy="48" r="20" fill="#fff" />
      <circle cx="48" cy="48" r="16" fill="#4680e8" />
    </>
  );
}

const teeth = Array.from({ length: 48 }, (_, i) => i * 7.5);
const petals = [
  ["#f19a38", 0],
  ["#f2d83a", 45],
  ["#b5cf4a", 90],
  ["#66b876", 135],
  ["#5a9be0", 180],
  ["#8d79c4", 225],
  ["#c9689c", 270],
  ["#e85a45", 315],
] as const;

type App = { name: string; bg: string; run?: boolean; art: React.ReactNode };

const apps: App[] = [
  {
    name: "Finder",
    bg: "bg-[#e4e8ef]",
    run: true,
    art: (
      <>
        <path d="M0 0h53c-8 18-11 34-12 56h13c0 14 2 28 6 40H0z" fill="url(#dkfinder)" />
        <path d="M26 29v8M71 29v8" stroke="#1d2b3f" strokeWidth="4" strokeLinecap="round" />
        <path d="M20 65c14 16 42 16 56 0" fill="none" stroke="#14202f" strokeWidth="3.500" strokeLinecap="round" />
        <path d="M53 0c-8 18-11 34-12 56h13" fill="none" stroke="#2a5ea0" strokeWidth="1" />
      </>
    ),
  },
  {
    name: "Launchpad",
    bg: "bg-[#b3b8c1]",
    art: (
      <>
        {["#6fd94c", "#f2bd3c", "#e8882f", "#cc2f24", "#8b9196", "#e84c5e", "#8f3fc4", "#2f8bf0", "#5cc9a0"].map((c, i) => (
          <rect key={c} x={16 + (i % 3) * 23.5} y={16 + Math.floor(i / 3) * 23.5} width="18" height="18" rx="4" fill={c} />
        ))}
      </>
    ),
  },
  {
    name: "WhatsApp",
    bg: "bg-linear-to-b from-[#86f280] to-[#59bf45]",
    run: true,
    art: <FaWhatsapp x={5} y={3} size={86} color="#f6f6f6" />,
  },
  {
    name: "Warp",
    bg: "bg-black",
    run: true,
    art: (
      <path
        d="M17 20h62v22L68 47v20L48 77 28 67V47L17 42zM17 24l31 14 31-14M48 38v38"
        fill="none"
        stroke="#fff"
        strokeWidth="3"
      />
    ),
  },
  {
    name: "Bitbucket",
    bg: "bg-white",
    run: true,
    art: (
      <>
        <path d="M9 12h78a3 3 0 0 1 3 3L81 80a4 4 0 0 1-4 4H19a4 4 0 0 1-4-4L6 15a3 3 0 0 1 3-3z" fill="#3f6be0" />
        <path d="M36 39h24l-3 20H39z" fill="#fff" />
      </>
    ),
  },
  { name: "Chrome", bg: "bg-[#f4f5f6]", run: true, art: <ChromeLogo /> },
  {
    name: "Mail",
    bg: "bg-linear-to-b from-[#3a6df0] to-[#5bc0fa]",
    run: true,
    art: (
      <>
        <rect x="14" y="27" width="68" height="42" rx="5" fill="#f2f2f2" />
        <path d="M15 67l22-21M81 67L59 46" stroke="#b5b5b5" strokeWidth="1.500" />
        <path d="M16 29l26 26c4 3 8 3 12 0l26-26" fill="#fbfbfb" stroke="#b0b0b0" strokeWidth="1.500" />
      </>
    ),
  },
  {
    name: "Fotos",
    bg: "bg-white",
    art: (
      <>
        {petals.map(([c, a]) => (
          <rect key={a} x="36" y="6" width="24" height="40" rx="12" fill={c} fillOpacity="0.850" transform={`rotate(${a} 48 48)`} />
        ))}
      </>
    ),
  },
  {
    name: "FaceTime",
    bg: "bg-linear-to-b from-[#84ef7e] to-[#55bc42]",
    art: (
      <>
        <rect x="14" y="27" width="48" height="42" rx="11" fill="#f3f7f3" />
        <path d="M64 42l14-11c2-1 3 0 3 1v32c0 1-1 2-3 1L64 54z" fill="#f3f7f3" />
      </>
    ),
  },
  {
    name: "Calendário",
    bg: "bg-[#f8f7f6]",
    run: true,
    art: (
      <>
        <rect width="96" height="30" fill="#e4594f" />
        <text x="48" y="23" textAnchor="middle" fontSize="19" fontWeight="700" fill="#fff">
          SET.
        </text>
        <text x="48" y="81" textAnchor="middle" fontSize="56" fontWeight="300" fill="#222">
          20
        </text>
      </>
    ),
  },
  {
    name: "Notas",
    bg: "bg-[#f3f2ef]",
    run: true,
    art: (
      <>
        <rect width="96" height="25" fill="#f8cf4c" />
        <path d="M0 26h96" stroke="#a8a29a" strokeWidth="2" />
        <path d="M3 29h90" stroke="#c8c5c0" strokeWidth="2" strokeDasharray="2 2" />
        <path d="M0 48h96M0 72h96" stroke="#cfcdc9" strokeWidth="2" />
      </>
    ),
  },
  {
    name: "App Store",
    bg: "bg-linear-to-b from-[#4fb3ee] to-[#2b62dd]",
    art: (
      <g stroke="#fff" strokeWidth="8" strokeLinecap="round">
        <path d="M53 22L33 56M26 68l-2 4M43 22l29 50" />
        <path d="M19 59h36M70 59h7" />
      </g>
    ),
  },
  {
    name: "Ajustes",
    bg: "bg-linear-to-b from-[#d5dde3] to-[#918f8c]",
    art: (
      <>
        <circle cx="48" cy="48" r="42" fill="#3a3b3d" />
        {teeth.map((a) => (
          <path key={a} d="M48 7v6" stroke="#b0b3b6" strokeWidth="2" transform={`rotate(${a} 48 48)`} />
        ))}
        <circle cx="48" cy="48" r="33" fill="#48494c" stroke="#b9bcbf" strokeWidth="5" />
        <circle cx="48" cy="48" r="23" fill="#45474a" stroke="#7d8083" strokeWidth="3" strokeDasharray="2 1" />
        <circle cx="48" cy="48" r="15" fill="#3c3d40" stroke="#6d7073" strokeWidth="2" />
        <path d="M48 48h31M48 48L32 21M48 48L32 75" stroke="#c3c6c9" strokeWidth="6" />
        <circle cx="48" cy="48" r="3" fill="#2c2d30" />
      </>
    ),
  },
  {
    name: "Biblioteca",
    bg: "",
    run: true,
    art: (
      <>
        <path d="M-8 20H8l10 60H4zM26 4l18 50-6 36zM60 6l8 4 18 50H74z" fill="#8b98a5" fillOpacity="0.450" />
        <path d="M72 6l10-6 22 59H88z" fill="#8b98a5" fillOpacity="0.450" />
        <path d="M16 0h18L24 92H5z" fill="#4391d3" />
        <path d="M44 0h18l-9 92H33z" fill="#68b654" />
        <path d="M72 0h18l-9 92H61z" fill="#f9cf45" />
      </>
    ),
  },
  {
    name: "iPhone",
    bg: "bg-[#b5b9c0]",
    art: (
      <>
        <rect x="28" y="7" width="40" height="82" rx="7" fill="#15181c" />
        <rect x="30" y="9" width="36" height="78" rx="5" fill="#f09a88" />
        <path d="M48 9c-8 30-4 50-18 66v-20c8-16 6-30 8-46z" fill="#f8c7b4" />
        <path d="M66 12c-8 4-16 14-17 26-1 10 6 6 17-6z" fill="#6b6f80" />
        <path d="M66 32c-10 4-17 14-20 26-2 9-8 17-16 20v4a5 5 0 0 0 5 5h26a5 5 0 0 0 5-5z" fill="#1f6285" />
        <rect x="42" y="10" width="12" height="4" rx="2" fill="#000" />
      </>
    ),
  },
  {
    name: "Calculadora",
    bg: "bg-[#d6d5d1]",
    run: true,
    art: (
      <>
        <rect x="22" y="13" width="52" height="71" rx="9" fill="#26282b" />
        <rect x="29" y="19" width="38" height="17" rx="3" fill="#55575b" />
        {[0, 1, 2].map((r) =>
          [0, 1, 2].map((c) => (
            <circle key={r + "-" + c} cx={34 + c * 14} cy={45 + r * 14} r="5" fill={c === 2 ? "#f0963a" : "#dcdcdc"} />
          ))
        )}
      </>
    ),
  },
  {
    name: "GitHub",
    bg: "bg-linear-to-b from-[#8a3bac] to-[#5a2d86]",
    run: true,
    art: <FaGithub x={7} y={7} size={82} color="#f0eef5" />,
  },
  {
    name: "VS Code",
    bg: "bg-white",
    run: true,
    art: (
      <>
        <path d="M64 14L14 58v4l6 5 44-34z" fill="#2668aa" />
        <path d="M20 30l44 34v18L14 38v-4z" fill="#3577c8" />
        <path d="M64 14l18 8v50l-18 10z" fill="#4c9fee" />
      </>
    ),
  },
  {
    name: "Word",
    bg: "bg-white",
    run: true,
    art: (
      <>
        <rect x="26" y="16" width="54" height="16" fill="#5a9fe8" />
        <rect x="26" y="32" width="54" height="16" fill="#4078cf" />
        <rect x="26" y="48" width="54" height="16" fill="#2a5abb" />
        <rect x="26" y="64" width="54" height="16" fill="#1f4088" />
        <rect x="9" y="30" width="37" height="36" rx="3" fill="#2253b4" />
        <text x="27" y="57" textAnchor="middle" fontSize="25" fontWeight="600" fill="#fff">
          W
        </text>
      </>
    ),
  },
];

function Dock() {
  return (
    <footer className="relative flex h-[178px] shrink-0 items-start bg-[linear-gradient(to_bottom,#000_0,#05080d_20px,transparent_110px),linear-gradient(to_right,#12284a_0,#173059_20%,#33404f_28%,#8a8078_36%,#3e4a5c_44%,#8b8178_52%,#23324a_62%,#1a335c_72%,#122c54_100%)] px-[108px] pt-[20px]">
      <div className="relative flex h-[148px] flex-1 items-start rounded-[42px] border-2 border-white/20 bg-[linear-gradient(to_right,#1e3049_0,#1f3450_25%,#34404d_34%,#4b474b_43%,#534c47_52%,#5a4c40_57%,#2b3a4f_66%,#22334e_75%,#1c2e4b_100%)] pl-5">
        <svg className="absolute size-0" aria-hidden="true">
          <linearGradient id="dkfinder" x1="0" y1="0" x2="0" y2="1">
            <stop offset="0" stopColor="#5cc6fa" />
            <stop offset="1" stopColor="#3466e6" />
          </linearGradient>
        </svg>
        <ul className="flex flex-1 justify-between">
          {apps.map((a) => (
            <li key={a.name} className="flex flex-col items-center">
              <button aria-label={a.name} className={"mt-[20px] size-[95px] rounded-[22px] " + (a.bg ? "overflow-hidden " + a.bg : "")}>
                <svg className="size-full overflow-visible" viewBox="0 0 96 96" aria-hidden="true">
                  {a.art}
                </svg>
              </button>
              {a.run && <span className="mt-[19px] size-2 rounded-full bg-[#a9bcd6]" />}
            </li>
          ))}
        </ul>
        <span className="mt-[18px] ml-[43px] h-[108px] w-[2px] bg-white/30" />
        <div className="mt-[62px] ml-[36px] flex w-[106px] flex-col items-end">
          <div className="flex h-[10px] w-full items-center bg-[#15171a] pl-[6px]">
            <span className="h-[2px] w-[54px] bg-[#77797c]" />
            <span className="ml-[3px] h-2 w-8 rounded-sm bg-[#9db6e8]" />
          </div>
          <div className="mt-3 size-9 rounded-[9px] bg-white">
            <svg className="size-full" viewBox="0 0 96 96" aria-hidden="true">
              <ChromeLogo />
            </svg>
          </div>
        </div>
        <svg className="mt-2 mr-[25px] ml-[32px] h-[114px] w-[85px]" viewBox="0 0 85 114" aria-hidden="true">
          <defs>
            <linearGradient id="bin" x1="0" y1="0" x2="1" y2="0">
              <stop offset="0" stopColor="#6c7074" />
              <stop offset="0.400" stopColor="#a4a7aa" />
              <stop offset="1" stopColor="#63676b" />
            </linearGradient>
          </defs>
          <path d="M2 18L12 106c2 8 59 8 61 0l10-88z" fill="url(#bin)" />
          <ellipse cx="42.500" cy="18" rx="41" ry="11" fill="#54585c" stroke="#a9acb0" strokeWidth="1.500" />
          <path d="M8 14l10-10 9-4 8 6 8 4 7-9 10 8 10 1 7 12-6 6-20 2-22-1-16-3z" fill="#e9e9ea" />
          <path d="M26 12l14-2-4 8zM48 20l8-14 8 10-6 8z" fill="#7c8ea5" />
          <path d="M30 14l8 0-4 5z" fill="#46b5b0" />
          <path d="M46 22l5-10 3 10z" fill="#c8663a" />
        </svg>
      </div>
    </footer>
  );
}

export default function App() {
  return (
    <div className="relative flex h-screen flex-col overflow-hidden bg-[#08090b] font-[Inter,sans-serif] leading-normal">
      <MenuBar />
      <div className="flex min-h-0 flex-1 bg-linear-to-b from-[#3a3d40] to-[#17181a] to-20% pt-[2px] pr-[14px]">
        <div className="relative flex min-w-0 flex-1 flex-col overflow-hidden rounded-t-[22px] rounded-b-[26px] border-2 border-[#5d5559] bg-[#0d0d0d]">
          <TabStrip />
          <Toolbar />
          <div className="flex min-h-0 flex-1">
            <div className="flex min-w-0 flex-1 flex-col">
              <PageHeader />
              <div className="flex min-h-0 flex-1">
                <Sidebar />
                <Main />
              </div>
            </div>
            <div className="w-[27px] shrink-0 border-l-2 border-[#3b3b3b] bg-[#2c2c2c] pt-[261px]">
              <div className="mx-auto h-[697px] w-4 rounded-full bg-[#6b6b6b]" />
            </div>
          </div>
          <FindBar />
        </div>
      </div>
      <Dock />
      <MeetWindow />
    </div>
  );
}
